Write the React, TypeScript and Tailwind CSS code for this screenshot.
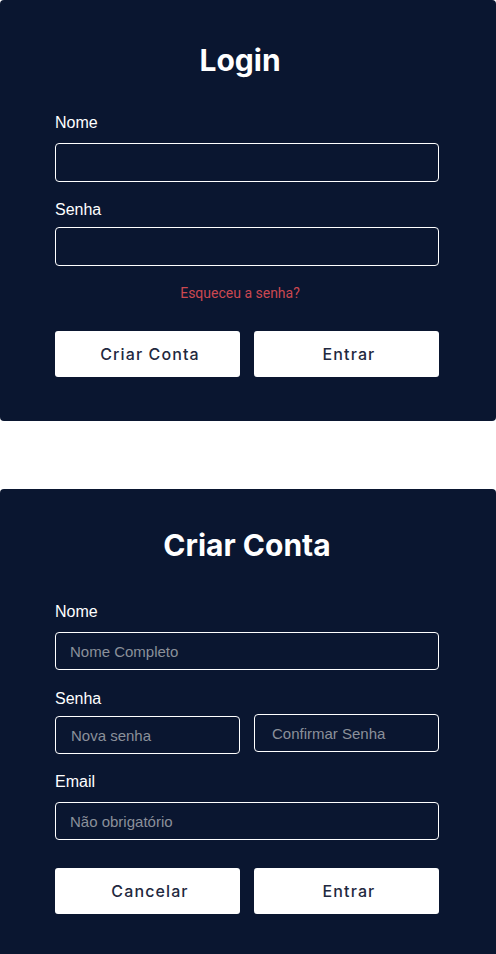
import React from 'react';

const inter = { fontFamily: 'Inter, "Noto Sans", sans-serif' };
const arial = { fontFamily: '"Liberation Sans", Arial, sans-serif' };

function Label({ children, className = '' }: { children: React.ReactNode; className?: string }) {
  return (
    <label className={`block text-base leading-6 text-white ${className}`} style={arial}>
      {children}
    </label>
  );
}

function Field({ placeholder, className = '', pad = 'pl-[14px]' }: { placeholder?: string; className?: string; pad?: string }) {
  return (
    <input
      placeholder={placeholder}
      style={arial}
      className={`block bg-transparent border border-white rounded text-[15px] text-white placeholder:text-[#8b909a] outline-none ${pad} ${className}`}
    />
  );
}

function Btn({ children }: { children: React.ReactNode }) {
  return (
    <button className="w-[185px] h-[46px] pl-[5px] bg-white rounded-[3px] text-[#1f2940] text-base font-medium tracking-[0.07em]">
      {children}
    </button>
  );
}

export default function App() {
  return (
    <div className="w-[496px] bg-white" style={inter}>
      {/* Login */}
      <div className="h-[421px] bg-[#0a1630] rounded pt-[42px]">
        <div className="w-[384px] ml-[55px] flex flex-col">
          <h1 className="h-9 text-3xl leading-9 font-bold text-white text-center pr-[14px]">Login</h1>
          <Label className="mt-[33px]">Nome</Label>
          <Field className="mt-[8px] h-[39px] w-full" />
          <Label className="mt-[16px]">Senha</Label>
          <Field className="mt-[5px] h-[39px] w-full" />
          <a
            className="mt-[15px] text-center text-sm leading-6 text-[#cc4851] pr-[14px]"
            style={{ fontFamily: 'Roboto, sans-serif' }}
          >
            Esqueceu a senha?
          </a>
          <div className="mt-[26px] flex gap-[14px]">
            <Btn>Criar Conta</Btn>
            <Btn>Entrar</Btn>
          </div>
        </div>
      </div>

      {/* Criar Conta */}
      <div className="mt-[68px] bg-[#0a1630] rounded pt-[38px] pb-[48px]">
        <div className="w-[384px] ml-[55px] flex flex-col">
          <h1 className="h-9 text-3xl leading-9 font-bold text-white text-center">Criar Conta</h1>
          <Label className="mt-[37px]">Nome</Label>
          <Field placeholder="Nome Completo" className="mt-[8px] h-[38px] w-full" />
          <Label className="mt-[17px]">Senha</Label>
          <div className="mt-[3px] flex items-start gap-[14px]">
            <Field placeholder="Nova senha" className="mt-[2px] h-[38px] w-[185px]" pad="pl-[15px]" />
            <Field placeholder="Confirmar Senha" className="h-[38px] w-[185px]" pad="pl-[17px]" />
          </div>
          <Label className="mt-[16px]">Email</Label>
          <Field placeholder="Não obrigatório" className="mt-[8px] h-[38px] w-full" />
          <div className="mt-[28px] flex gap-[14px]">
            <Btn>Cancelar</Btn>
            <Btn>Entrar</Btn>
          </div>
        </div>
      </div>
    </div>
  );
}
